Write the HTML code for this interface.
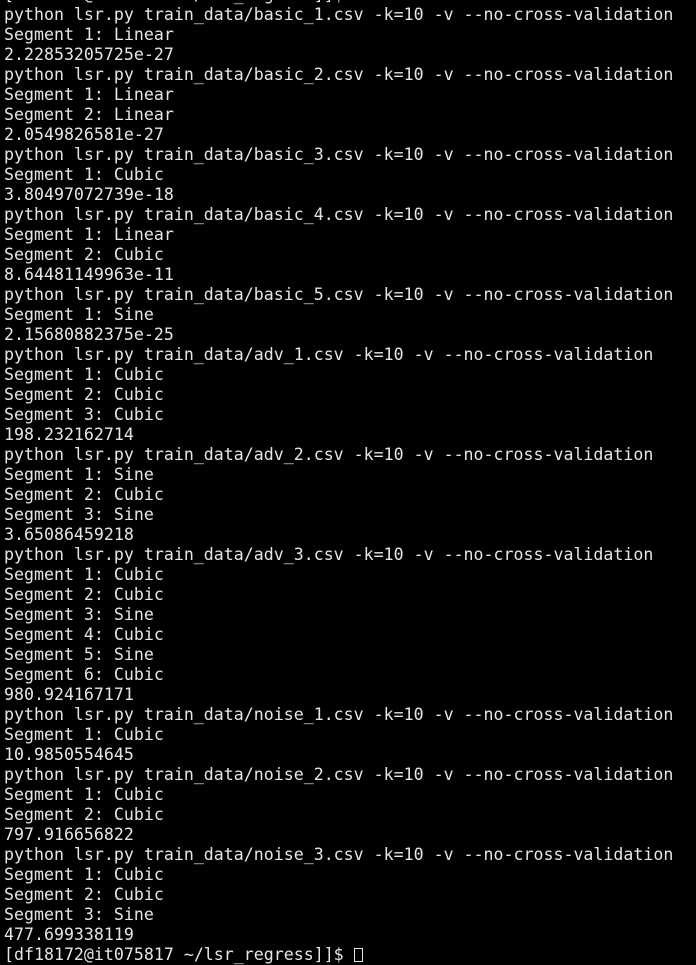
<!DOCTYPE html>
<html><head><meta charset="utf-8"><style>
html,body{margin:0;padding:0;background:#000;width:696px;height:950px;overflow:hidden}
pre{margin:0;position:absolute;left:4px;top:-15px;font-family:"DejaVu Sans Mono","Liberation Mono",monospace;font-size:16.6px;line-height:20px;color:#e6e6e6;white-space:pre}
.cur{display:inline-block;width:9px;height:14px;border:1px solid #e6e6e6;vertical-align:-2px;box-sizing:border-box}
</style></head><body><pre>[df18172@it075817 ~/lsr_regress]]$ bash run.sh
python lsr.py train_data/basic_1.csv -k=10 -v --no-cross-validation
Segment 1: Linear
2.22853205725e-27
python lsr.py train_data/basic_2.csv -k=10 -v --no-cross-validation
Segment 1: Linear
Segment 2: Linear
2.0549826581e-27
python lsr.py train_data/basic_3.csv -k=10 -v --no-cross-validation
Segment 1: Cubic
3.80497072739e-18
python lsr.py train_data/basic_4.csv -k=10 -v --no-cross-validation
Segment 1: Linear
Segment 2: Cubic
8.64481149963e-11
python lsr.py train_data/basic_5.csv -k=10 -v --no-cross-validation
Segment 1: Sine
2.15680882375e-25
python lsr.py train_data/adv_1.csv -k=10 -v --no-cross-validation
Segment 1: Cubic
Segment 2: Cubic
Segment 3: Cubic
198.232162714
python lsr.py train_data/adv_2.csv -k=10 -v --no-cross-validation
Segment 1: Sine
Segment 2: Cubic
Segment 3: Sine
3.65086459218
python lsr.py train_data/adv_3.csv -k=10 -v --no-cross-validation
Segment 1: Cubic
Segment 2: Cubic
Segment 3: Sine
Segment 4: Cubic
Segment 5: Sine
Segment 6: Cubic
980.924167171
python lsr.py train_data/noise_1.csv -k=10 -v --no-cross-validation
Segment 1: Cubic
10.9850554645
python lsr.py train_data/noise_2.csv -k=10 -v --no-cross-validation
Segment 1: Cubic
Segment 2: Cubic
797.916656822
python lsr.py train_data/noise_3.csv -k=10 -v --no-cross-validation
Segment 1: Cubic
Segment 2: Cubic
Segment 3: Sine
477.699338119
[df18172@it075817 ~/lsr_regress]]$ <span class="cur"></span></pre></body></html>
